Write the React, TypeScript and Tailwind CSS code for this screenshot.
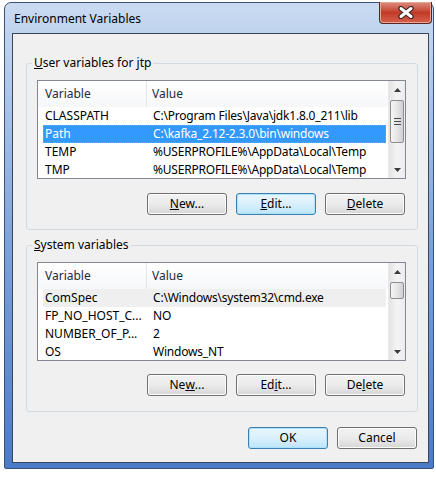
const userVars = [
  { name: "CLASSPATH", value: "C:\\Program Files\\Java\\jdk1.8.0_211\\lib" },
  { name: "Path", value: "C:\\kafka_2.12-2.3.0\\bin\\windows" },
  { name: "TEMP", value: "%USERPROFILE%\\AppData\\Local\\Temp" },
  { name: "TMP", value: "%USERPROFILE%\\AppData\\Local\\Temp" },
];

const systemVars = [
  { name: "ComSpec", value: "C:\\Windows\\system32\\cmd.exe" },
  { name: "FP_NO_HOST_C...", value: "NO" },
  { name: "NUMBER_OF_P...", value: "2" },
  { name: "OS", value: "Windows_NT" },
];

function Arrow({ down }: { down?: boolean }) {
  return (
    <svg width="7" height="4" viewBox="0 0 7 4">
      <path d={down ? "M0 0H7L3.5 4Z" : "M0 4L3.5 0L7 4Z"} fill="#3b3b3b" />
    </svg>
  );
}

function ScrollBar({ thumb, gap, grip }: { thumb: number; gap: number; grip?: boolean }) {
  return (
    <div className="w-[17px] h-full flex flex-col bg-linear-to-r from-[#e4e4e4] via-[#f4f4f4] to-[#ececec] border-l border-[#e9e9e9]">
      <div className="h-[17px] flex items-center justify-center">
        <Arrow />
      </div>
      <div
        className="mx-px rounded-[2px] border border-[#8f8f8f] bg-linear-to-r from-[#f4f4f4] via-[#e6e6e6] to-[#cfcfcf] flex flex-col items-center justify-center gap-[2px]"
        style={{ height: thumb, marginTop: gap }}
      >
        {grip && (
          <>
            <div className="w-[7px] h-px bg-[#4a4a4a]" />
            <div className="w-[7px] h-px bg-[#4a4a4a]" />
            <div className="w-[7px] h-px bg-[#4a4a4a]" />
          </>
        )}
      </div>
      <div className="flex-1" />
      <div className="h-[17px] flex items-center justify-center">
        <Arrow down />
      </div>
    </div>
  );
}

function ListView({
  rows,
  selected,
  hover,
  thumb,
  gap,
  grip,
}: {
  rows: { name: string; value: string }[];
  selected?: number;
  hover?: number;
  thumb: number;
  gap: number;
  grip?: boolean;
}) {
  return (
    <div className="w-[369px] h-[99px] border border-[#828790] bg-white flex overflow-hidden">
      <div className="flex-1 flex flex-col">
        <div className="h-[26px] shrink-0 flex items-center bg-linear-to-b from-white to-[#f6f7f9] text-[#1e2a3e]">
          <div className="w-[109px] pl-[7px] border-r border-[#e3e6ea] h-full flex items-center">Variable</div>
          <div className="pl-[5px]">Value</div>
        </div>
        <div className="ml-[5px] mr-[2px] flex flex-col">
          {rows.map((r, i) => (
            <div
              key={r.name}
              className={
                "h-[18px] shrink-0 flex leading-[18px] whitespace-nowrap " +
                (i === selected
                  ? "bg-[#3399ff] text-white outline-1 outline-dotted outline-[#e8912a] -outline-offset-1"
                  : i === hover
                  ? "bg-[#efefef] text-black"
                  : "text-black")
              }
            >
              <div className="w-[106px] pl-[2px]">{r.name}</div>
              <div className="pl-[4px] tracking-[-0.2px]">{r.value}</div>
            </div>
          ))}
        </div>
      </div>
      <ScrollBar thumb={thumb} gap={gap} grip={grip} />
    </div>
  );
}

function Button({ children, focused }: { children: React.ReactNode; focused?: boolean }) {
  return (
    <div
      className={
        "w-[80px] h-[22px] rounded-[3px] border flex items-center justify-center text-black leading-[20px] " +
        (focused
          ? "border-[#3c7fb1] bg-linear-to-b from-[#eaf6fd] via-[#d9f0fc] to-[#bde4f8] shadow-[inset_0_0_0_1px_#aee1fb]"
          : "border-[#707070] bg-linear-to-b from-[#f2f2f2] via-[#ebebeb] to-[#d6d6d6] shadow-[inset_0_0_0_1px_#fcfcfc]")
      }
    >
      {children}
    </div>
  );
}

function Group({
  label,
  children,
  className,
}: {
  label: React.ReactNode;
  children: React.ReactNode;
  className: string;
}) {
  return (
    <div className={"relative w-[392px] ml-[13px] border border-[#d3dbe1] rounded-[3px] " + className}>
      <span className="absolute -top-[9px] left-[5px] px-[2px] bg-[#f0f0f0] leading-[16px] text-black">{label}</span>
      {children}
    </div>
  );
}

export default function App() {
  return (
    <div className="w-[436px] h-[478px] bg-white pt-[2px] pl-[4px] font-['Noto_Sans',sans-serif] text-[12px]">
      <div className="w-[430px] h-[467px] rounded-t-[7px] rounded-b-[2px] border border-[#3a5277] bg-linear-to-b from-[#cadbf1] via-[#7fa4dc] to-[#4a7bc8] flex flex-col">
        {/* title bar */}
        <div className="h-[30px] shrink-0 flex items-start justify-between">
          <div className="pl-[9px] pt-[8px] leading-[16px] text-black">Environment Variables</div>
          <div className="w-[53px] h-[22px] -mt-px mr-[1px] rounded-b-[4px] border border-t-0 border-[#5c2620] bg-linear-to-b from-[#dc8d80] via-[#c23a27] to-[#d6604c] flex items-center justify-center shadow-[inset_0_0_0_1px_#e7a498]">
            <svg width="18" height="13" viewBox="0 0 18 13">
              <path d="M4 2.5L14 10.5M14 2.5L4 10.5" stroke="#3e2523" strokeWidth="5.4" strokeLinecap="round" />
              <path d="M4 2.5L14 10.5M14 2.5L4 10.5" stroke="#ffffff" strokeWidth="3" strokeLinecap="round" />
            </svg>
          </div>
        </div>

        {/* client area */}
        <div className="ml-[7px] w-[417px] h-[430px] border border-[#3b4759] bg-[#f0f0f0] flex flex-col">
          <Group
            className="mt-[29px] pt-[16px] pl-[10px] pr-[12px] pb-[14px]"
            label={
              <>
                <span className="underline">U</span>ser variables for jtp
              </>
            }
          >
            <ListView rows={userVars} selected={1} thumb={43} gap={2} grip />
            <div className="mt-[14px] flex justify-end gap-[9px]">
              <Button>
                <span className="underline">N</span>ew...
              </Button>
              <Button focused>
                <span className="underline">E</span>dit...
              </Button>
              <Button>
                <span className="underline">D</span>elete
              </Button>
            </div>
          </Group>

          <Group
            className="mt-[15px] pt-[16px] pl-[10px] pr-[12px] pb-[15px]"
            label={
              <>
                <span className="underline">S</span>ystem variables
              </>
            }
          >
            <ListView rows={systemVars} hover={0} thumb={17} gap={2} />
            <div className="mt-[13px] flex justify-end gap-[9px]">
              <Button>
                Ne<span className="underline">w</span>...
              </Button>
              <Button>
                Ed<span className="underline">i</span>t...
              </Button>
              <Button>
                De<span className="underline">l</span>ete
              </Button>
            </div>
          </Group>

          <div className="mt-[15px] pr-[11px] flex justify-end gap-[9px]">
            <Button focused>OK</Button>
            <Button>Cancel</Button>
          </div>
        </div>
      </div>
    </div>
  );
}
